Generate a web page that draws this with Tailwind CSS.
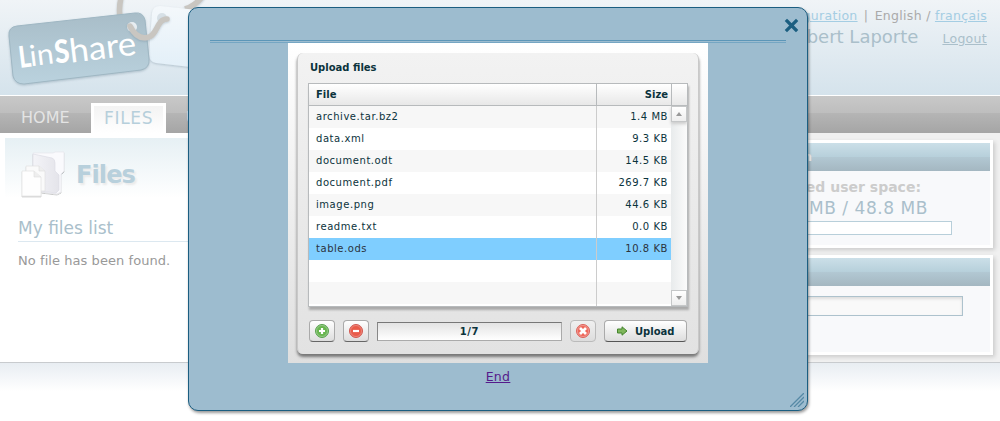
<!DOCTYPE html>
<html lang="en"><head><meta charset="utf-8"><title>LinShare</title>
<script src="https://cdn.jsdelivr.net/npm/@tailwindcss/browser@4"></script></head>
<body class="relative h-[421px] w-[1000px] overflow-hidden bg-white font-['DejaVu_Sans',sans-serif] text-[13px] text-[#999]">
<header class="flex h-[96px] justify-between border-b border-white bg-linear-to-b from-[#f0f4f7] to-[#d5e3ec]">
  <svg class="shrink-0" width="230" height="95" viewBox="0 0 230 95">
    <defs>
      <linearGradient id="tag" x1="0" y1="0" x2="0" y2="1"><stop offset="0" stop-color="#a8bdc8"/><stop offset="1" stop-color="#bad2de"/></linearGradient>
      <linearGradient id="tag2" x1="0" y1="0" x2="0" y2="1"><stop offset="0" stop-color="#f4f8fb"/><stop offset="1" stop-color="#e2eff8"/></linearGradient>
      <filter id="sh" x="-20%" y="-20%" width="140%" height="150%"><feDropShadow dx="0" dy="1" stdDeviation="1" flood-color="#60788a" flood-opacity=".35"/></filter>
    </defs>
    <path d="M120 17C119 10 119 6 121 -2M185 9Q195 6 203 -4" fill="none" stroke="#c9c6c1" stroke-width="5.5" filter="url(#sh)"/>
    <path d="M160 6L225 13V71L156 63Q149 62 149 54L152 13Q153 6 160 6Z" fill="url(#tag2)" filter="url(#sh)"/>
    <path d="M17 26L135 13Q143 12 145 20L149 59Q150 68 141 70L24 84Q15 84 13 76L9 36Q8 27 17 26Z" fill="url(#tag)" stroke="#9fb7c3" filter="url(#sh)"/>
    <circle cx="132" cy="27" r="5" fill="#e8eef2"/><circle cx="162" cy="18" r="5" fill="#d7e0e6"/>
    <path d="M130 26C134 34 140 39 147 37.500C158 36 156 19 167 19" fill="none" stroke="#c9c6c1" stroke-width="5.500" stroke-linecap="round" filter="url(#sh)"/>
    <g transform="rotate(-7 20 68)" fill="#fff" font-family="Lato,sans-serif">
      <text x="20" y="68" font-size="30" font-weight="900" textLength="12" lengthAdjust="spacingAndGlyphs">L</text>
      <text x="31" y="67.500" font-size="29" textLength="24" lengthAdjust="spacingAndGlyphs">in</text>
      <text x="56" y="68" font-size="32" font-weight="900" textLength="15" lengthAdjust="spacingAndGlyphs">S</text>
      <text x="71" y="69" font-size="33" textLength="67" lengthAdjust="spacingAndGlyphs">hare</text>
    </g>
  </svg>
  <div class="w-[300px] pr-[13px] pt-[8px] text-right">
    <div class="h-[17px] whitespace-nowrap text-[12.500px] leading-[16px] tracking-[.3px] text-[#aaa]"><a class="mr-[2px] text-[#a4cde3] underline">Configuration</a> <span class="mr-[2px]">|</span> English / <a class="text-[#a4cde3] underline">français</a></div>
    <div class="flex items-center justify-end gap-[24px] whitespace-nowrap text-[#aabfca]"><span class="text-[18px] leading-[24px]">Robert Laporte</span><a class="pt-[4px] text-[12.500px] tracking-[.3px] underline">Logout</a></div>
  </div>
</header>
<nav class="flex h-[37px] items-end bg-[linear-gradient(#c8c8c8,#bebebe_46%,#b5b5b5_47%,#a5a5a5)] text-[16px] leading-[24px] text-[#e4e4e4]">
  <span class="w-[91px] pb-[3px] pl-[21px]">HOME</span>
  <span class="h-[30px] w-[75px] border-x-3 border-t-3 border-white bg-linear-to-b from-[#f3f3f3] to-white pl-[10px] text-[17px] tracking-[.7px] text-[#b6cfdb]">FILES</span>
  <span class="pb-[3px] pl-[20px]">USERS</span>
</nav>
<main class="flex h-[229px] justify-between bg-linear-to-r from-white from-50% to-[#f0f0f0] to-50%">
  <section class="ml-[5px] mt-[5px] w-[495px] bg-[linear-gradient(#e6f0f4,#fff_60px)]">
    <div class="flex h-[72px] items-center pl-[16px]">
      <svg width="46" height="48" viewBox="0 0 46 48"><defs><linearGradient id="fo"><stop stop-color="#f4f4f8"/><stop offset="1" stop-color="#e4e4ea"/></linearGradient><filter id="s2"><feDropShadow dx="0" dy="1" stdDeviation=".7" flood-opacity=".25"/></filter></defs>
      <g filter="url(#s2)"><path d="M12 3H32L34 2H43V21L40 24V42L36 44L12 41Z" fill="#fafafd" stroke="#e5e5eb" stroke-width=".7"/><path d="M12 4L31 8Q34 9 34 13V21L38 25V40L35 43L12 40Z" fill="url(#fo)" stroke="#dddde5" stroke-width=".7"/><path d="M5 16H18L24 21V41H5Z" fill="#fafafa" stroke="#ddd" stroke-width=".6"/><path d="M1 21H13L20 27V46H1Z" fill="#fefefe" stroke="#ddd" stroke-width=".6"/><path d="M13 21V27H20M18 16V21H24" fill="#eee" stroke="#ddd" stroke-width=".6"/></g></svg>
      <h1 class="pl-[9px] pt-[2px] text-[24px] font-bold tracking-[-0.9px] text-[#b8d0dc] [text-shadow:2px_2px_2px_#eaeaea]">Files</h1>
    </div>
    <h2 class="ml-[13px] mt-[6px] h-[26px] border-b border-[#dce8f0] text-[17px] leading-[24px] text-[#aabfcb]">My files list</h2>
    <p class="ml-[13px] mt-[11px] text-[13px] leading-[16px] tracking-[.06px]">No file has been found.</p>
  </section>
  <aside class="flex flex-col gap-[7px] pr-[7px] pt-[7px]">
    <div class="h-[108px] w-[243px] border-3 border-white bg-[#f8f9fb] shadow-[2px_2px_4px_#ccc]">
      <div class="h-[28px] bg-[linear-gradient(#cbdfe8,#b7d0db_49%,#b2c8d3_50%,#a4b7c1)] pl-[7px] text-[13px] leading-[28px] font-bold text-[#eee]"><span class="inline-block w-[52px] text-right">on</span></div>
      <div class="w-[168px] pt-[7px] text-right text-[14px] leading-[18px] font-bold whitespace-nowrap text-[#ccc]">Used user space:</div>
      <div class="w-[175px] text-right text-[17px] leading-[24px] tracking-[.55px] whitespace-nowrap text-[#aabfcb]">0 MB / 48.8 MB</div>
      <div class="mt-[1px] h-[14px] w-[199px] border border-[#b8cfda] bg-white"></div>
    </div>
    <div class="h-[100px] w-[243px] border-3 border-white bg-[#f8f9fb] shadow-[2px_2px_4px_#ccc]">
      <div class="h-[28px] bg-[linear-gradient(#cbdfe8,#b7d0db_49%,#b2c8d3_50%,#a4b7c1)]"></div>
      <div class="mt-[10px] h-[20px] w-[210px] border border-[#adc2cd] bg-[#f9f9f9] shadow-[inset_0_2px_3px_#ddd]"></div>
    </div>
  </aside>
</main>
<footer class="h-[59px] border-t border-[#c8cbce] bg-[linear-gradient(#e8edf2,#fff_28px)]"></footer>

<div role="dialog" class="absolute top-[7px] left-[188px] flex h-[404px] w-[620px] flex-col rounded-[10px] border border-[#1b5e81] bg-[#9dbccf] shadow-[1px_2px_3px_#0006]">
  <div class="flex h-[32px] items-center justify-end pt-[3px] pr-[8px]"><svg width="15" height="15" viewBox="0 0 15 15"><path d="M3 3L12 12M12 3L3 12" stroke="#1b5e80" stroke-width="3.2" stroke-linecap="square"/></svg></div>
  <div class="mx-[21px] h-[3px] shrink-0 border-y border-t-[#5c96b8] border-b-[#75a6c3]"></div>
  <div class="mx-auto h-[320px] w-[420px] shrink-0 bg-linear-to-b from-white to-[#dfdfdf] px-[9px] pt-[10px] text-[#0b333c]">
    <div class="flex h-[301px] flex-col rounded-[6px] border-x border-[#c9c9c9] bg-linear-to-b from-[#f2f2f2] to-[#e2e2e2] px-[10px] shadow-[0_3px_3px_#777]">
      <div class="h-[30px] pl-[2px] text-[10px] leading-[29px] font-bold">Upload files</div>
      <div class="flex h-[224px] w-[380px] flex-col border border-[#b7babc] bg-white text-[10px] shadow-[1px_3px_2px_#aaa]">
        <div class="flex h-[22px] shrink-0 border-b border-[#b7babc] bg-linear-to-b from-white to-[#e8e8e8] leading-[21px] font-bold"><span class="w-[288px] border-r border-[#b7babc] pl-[7px]">File</span><span class="w-[75px] border-r border-[#b7babc] pr-[3px] text-right">Size</span></div>
        <div class="flex flex-1">
          <div class="w-[288px] border-r border-[#ccc] leading-[22px] tracking-[.55px] *:h-[22px] *:pl-[7px]">
            <p class="bg-[#f7f7f7]">archive.tar.bz2</p><p>data.xml</p><p class="bg-[#f7f7f7]">document.odt</p><p>document.pdf</p><p class="bg-[#f7f7f7]">image.png</p><p>readme.txt</p><p class="bg-[#7fceff] text-[#2b333c]">table.ods</p><p></p><p class="bg-[#f7f7f7]"></p>
          </div>
          <div class="w-[74px] text-right leading-[22px] tracking-[.55px] *:h-[22px] *:pr-[3px]">
            <p class="bg-[#f7f7f7]">1.4 MB</p><p>9.3 KB</p><p class="bg-[#f7f7f7]">14.5 KB</p><p>269.7 KB</p><p class="bg-[#f7f7f7]">44.6 KB</p><p>0.0 KB</p><p class="bg-[#7fceff] text-[#2b333c]">10.8 KB</p><p></p><p class="bg-[#f7f7f7]"></p>
          </div>
          <div class="flex w-[16px] flex-col justify-between bg-linear-to-r from-[#e8ebec] to-[#fbfbfb]">
            <span class="grid h-[16px] place-items-center border border-[#c5c7c8] bg-linear-to-b from-white to-[#eee] shadow-[0_2px_3px_#ccc]"><svg width="6" height="4"><path d="M0 4L3 0L6 4Z" fill="#999"/></svg></span>
            <span class="grid h-[16px] place-items-center border border-[#c5c7c8] bg-linear-to-b from-white to-[#eee]"><svg width="6" height="4"><path d="M0 0H6L3 4Z" fill="#999"/></svg></span>
          </div>
        </div>
      </div>
      <div class="ml-[1px] mt-[13px] flex h-[22px] w-[378px] items-center gap-[8px]">
        <button class="grid h-[22px] w-[26px] shrink-0 place-items-center rounded-[4px] border border-[#aaa] border-b-[#666] bg-linear-to-b from-white to-[#ddd]"><svg width="14" height="14" viewBox="0 0 14 14"><circle cx="7" cy="7" r="6.500" fill="#79b96e" stroke="#58a24d"/><circle cx="7" cy="7" r="5.500" fill="#68b64f" stroke="#a9d49b" stroke-width=".6"/><path d="M7 4V10M4 7H10" stroke="#fff" stroke-width="2.200"/></svg></button>
        <button class="grid h-[22px] w-[26px] shrink-0 place-items-center rounded-[4px] border border-[#aaa] border-b-[#666] bg-linear-to-b from-white to-[#ddd]"><svg width="14" height="14" viewBox="0 0 14 14"><circle cx="7" cy="7" r="6.500" fill="#e36b60" stroke="#d25850"/><circle cx="7" cy="7" r="5.500" fill="#e95b4a" stroke="#f09a8f" stroke-width=".6"/><path d="M4 7H10" stroke="#fff" stroke-width="2.200"/></svg></button>
        <div class="h-[19px] w-[185px] shrink-0 border border-[#aaa] border-t-[#777] border-l-[#888] bg-linear-to-b from-[#e3e3e3] to-white text-center text-[10px] leading-[18px] font-bold tracking-[.6px]">1/7</div>
        <button class="grid h-[22px] w-[26px] shrink-0 place-items-center rounded-[4px] border border-[#bbb] bg-linear-to-b from-[#f0f0f0] to-[#ddd]"><svg width="14" height="14" viewBox="0 0 14 14"><circle cx="7" cy="7" r="6.500" fill="#e9857d" stroke="#dc625b"/><circle cx="7" cy="7" r="5.500" fill="#ee6658" stroke="#f5aaa2" stroke-width=".6"/><path d="M4 4L10 10M10 4L4 10" stroke="#fff" stroke-width="2.800"/></svg></button>
        <button class="flex h-[22px] w-[83px] shrink-0 items-center gap-[8px] rounded-[4px] border border-[#aaa] border-b-[#555] bg-linear-to-b from-white to-[#ddd] pl-[12px] text-[10px] font-bold"><svg width="11" height="10" viewBox="0 0 11 10"><path d="M.5 3H5V.8L10 5L5 9.200V7H.5Z" fill="#7fb65b" stroke="#45852e"/></svg><span class="-ml-px">Upload</span></button>
      </div>
    </div>
  </div>
  <a class="mt-[5px] text-center text-[12.500px] leading-[18px] tracking-[.3px] text-[#551a8b] underline">End</a>
  <svg class="absolute right-[3px] bottom-[3px]" width="14" height="14" viewBox="0 0 14 14"><path d="M0 14L14 0M4 14L14 4M8 14L14 8" stroke="#5689a5" stroke-width="1.300"/></svg>
</div>
</body></html>
